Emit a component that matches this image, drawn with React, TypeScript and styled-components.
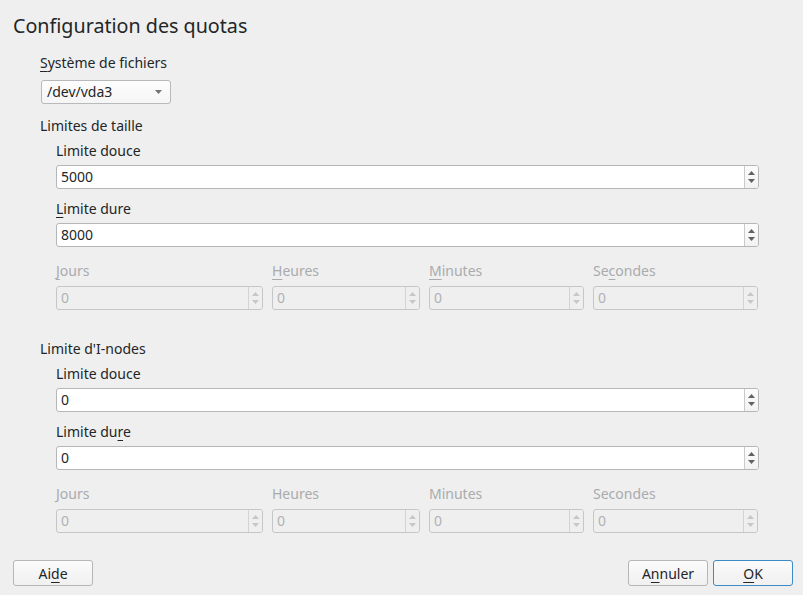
import React from "react";
import styled, { createGlobalStyle } from "styled-components";

const Global = createGlobalStyle`
  html, body { margin: 0; padding: 0; background: #efefef; }
  body { font-family: "Noto Sans", "DejaVu Sans", sans-serif; color: #232627; }
  * { box-sizing: border-box; }
`;

const Window = styled.div`
  width: 803px;
  height: 595px;
  display: flex;
  flex-direction: column;
  background: #efefef;
  font-size: 14px;
  line-height: 19px;
`;

const Title = styled.h1`
  margin: 12px 0 0 13px;
  font-size: 19.7px;
  line-height: 27px;
  font-weight: 400;
  color: #232627;
`;

const Content = styled.div`
  flex: 1;
  display: flex;
  flex-direction: column;
  padding: 0 44px 0 40px;
`;

const Label = styled.div<{ $mt: number; $disabled?: boolean }>`
  margin-top: ${(p) => p.$mt}px;
  height: 19px;
  white-space: nowrap;
  color: ${(p) => (p.$disabled ? "#a9abad" : "#232627")};
  u {
    text-decoration: underline;
    text-decoration-thickness: 1px;
    text-underline-offset: 3px;
  }
`;

const Combo = styled.div`
  margin-top: 8px;
  margin-left: 1px;
  width: 130px;
  height: 24px;
  display: flex;
  align-items: center;
  justify-content: space-between;
  padding: 0 8px 0 5px;
  border: 1px solid #b7b9bb;
  border-radius: 3px;
  background: linear-gradient(#fdfdfd, #f5f5f5);
  line-height: 22px;
`;

const Caret = styled.svg`
  width: 7px;
  height: 4px;
`;

const Section = styled.div<{ $mt: number }>`
  margin-top: ${(p) => p.$mt}px;
  display: flex;
  flex-direction: column;
`;

const Inner = styled.div`
  padding-left: 16px;
  display: flex;
  flex-direction: column;
`;

const Spin = styled.div<{ $mt?: number; $disabled?: boolean }>`
  margin-top: ${(p) => p.$mt ?? 0}px;
  height: 24px;
  display: flex;
  border: 1px solid ${(p) => (p.$disabled ? "#c5c6c7" : "#b4b6b8")};
  border-radius: 3px;
  background: ${(p) => (p.$disabled ? "#efefef" : "#ffffff")};
  color: ${(p) => (p.$disabled ? "#b0b2b4" : "#232627")};
`;

const SpinValue = styled.div`
  flex: 1;
  padding-left: 4px;
  line-height: 22px;
`;

const SpinCol = styled.div<{ $disabled?: boolean }>`
  width: 14px;
  border-left: 1px solid ${(p) => (p.$disabled ? "#d2d3d4" : "#c9cacb")};
  display: flex;
  flex-direction: column;
  align-items: center;
  justify-content: center;
  gap: 4px;
  background: ${(p) => (p.$disabled ? "#efefef" : "linear-gradient(#fcfcfc, #f2f2f2)")};
  border-radius: 0 2px 2px 0;
`;

const Arrow = styled.svg`
  width: 7px;
  height: 4px;
  display: block;
`;

const TimeGrid = styled.div`
  display: grid;
  grid-template-columns: 207px 148px 155px 165px;
  column-gap: 9px;
`;

const TimeCell = styled.div`
  display: flex;
  flex-direction: column;
`;

const ButtonBar = styled.div`
  display: flex;
  align-items: center;
  padding: 0 10px 9px 13px;
  gap: 5px;
`;

const Spacer = styled.div`
  flex: 1;
`;

const Button = styled.button<{ $default?: boolean }>`
  width: 80px;
  height: 26px;
  padding: 0;
  font-family: "Noto Sans", "DejaVu Sans", sans-serif;
  font-size: 14px;
  color: #232627;
  border: 1px solid ${(p) => (p.$default ? "#3e8ac4" : "#b4b6b8")};
  border-radius: 3px;
  background: linear-gradient(#fbfbfb, #f0f0f0);
  u {
    text-decoration: underline;
    text-decoration-thickness: 1px;
    text-underline-offset: 3px;
  }
`;

const Arrows = ({ disabled }: { disabled?: boolean }) => {
  const c = disabled ? "#c6c7c8" : "#5f6163";
  return (
    <SpinCol $disabled={disabled}>
      <Arrow viewBox="0 0 7 4">
        <polygon points="0,4 7,4 3.5,0" fill={c} />
      </Arrow>
      <Arrow viewBox="0 0 7 4">
        <polygon points="0,0 7,0 3.5,4" fill={c} />
      </Arrow>
    </SpinCol>
  );
};

const SpinBox = ({ value, disabled, mt }: { value: string; disabled?: boolean; mt?: number }) => (
  <Spin $mt={mt} $disabled={disabled}>
    <SpinValue>{value}</SpinValue>
    <Arrows disabled={disabled} />
  </Spin>
);

const TimeRow = ({ marks }: { marks: boolean }) => {
  const items: React.ReactNode[] = [
    marks ? <><u>J</u>ours</> : "Jours",
    marks ? <><u>H</u>eures</> : "Heures",
    marks ? <><u>M</u>inutes</> : "Minutes",
    marks ? <>Se<u>c</u>ondes</> : "Secondes",
  ];
  return (
    <TimeGrid>
      {items.map((l, i) => (
        <TimeCell key={i}>
          <Label $mt={14} $disabled>{l}</Label>
          <SpinBox value="0" disabled mt={6} />
        </TimeCell>
      ))}
    </TimeGrid>
  );
};

const LimitSection = ({
  title,
  soft,
  hard,
  hardLabel,
  mt,
  marks,
}: {
  title: string;
  soft: string;
  hard: string;
  hardLabel: React.ReactNode;
  mt: number;
  marks: boolean;
}) => (
  <Section $mt={mt}>
    <Label $mt={0}>{title}</Label>
    <Inner>
      <Label $mt={6}>Limite douce</Label>
      <SpinBox value={soft} mt={5} />
      <Label $mt={10}>{hardLabel}</Label>
      <SpinBox value={hard} mt={5} />
      <TimeRow marks={marks} />
    </Inner>
  </Section>
);

export default function App() {
  return (
    <>
      <Global />
      <Window>
        <Title>Configuration des quotas</Title>
        <Content>
          <Label $mt={14}>
            <u>S</u>ystème de fichiers
          </Label>
          <Combo>
            <span>/dev/vda3</span>
            <Caret viewBox="0 0 7 4">
              <polygon points="0,0 7,0 3.5,4" fill="#707274" />
            </Caret>
          </Combo>
          <LimitSection
            mt={12}
            title="Limites de taille"
            soft="5000"
            hard="8000"
            hardLabel={<><u>L</u>imite dure</>}
            marks
          />
          <LimitSection
            mt={29}
            title="Limite d'I-nodes"
            soft="0"
            hard="0"
            hardLabel={<>Limite du<u>r</u>e</>}
            marks={false}
          />
        </Content>
        <ButtonBar>
          <Button>
            Ai<u>d</u>e
          </Button>
          <Spacer />
          <Button>
            A<u>n</u>nuler
          </Button>
          <Button $default>
            <u>O</u>K
          </Button>
        </ButtonBar>
      </Window>
    </>
  );
}
